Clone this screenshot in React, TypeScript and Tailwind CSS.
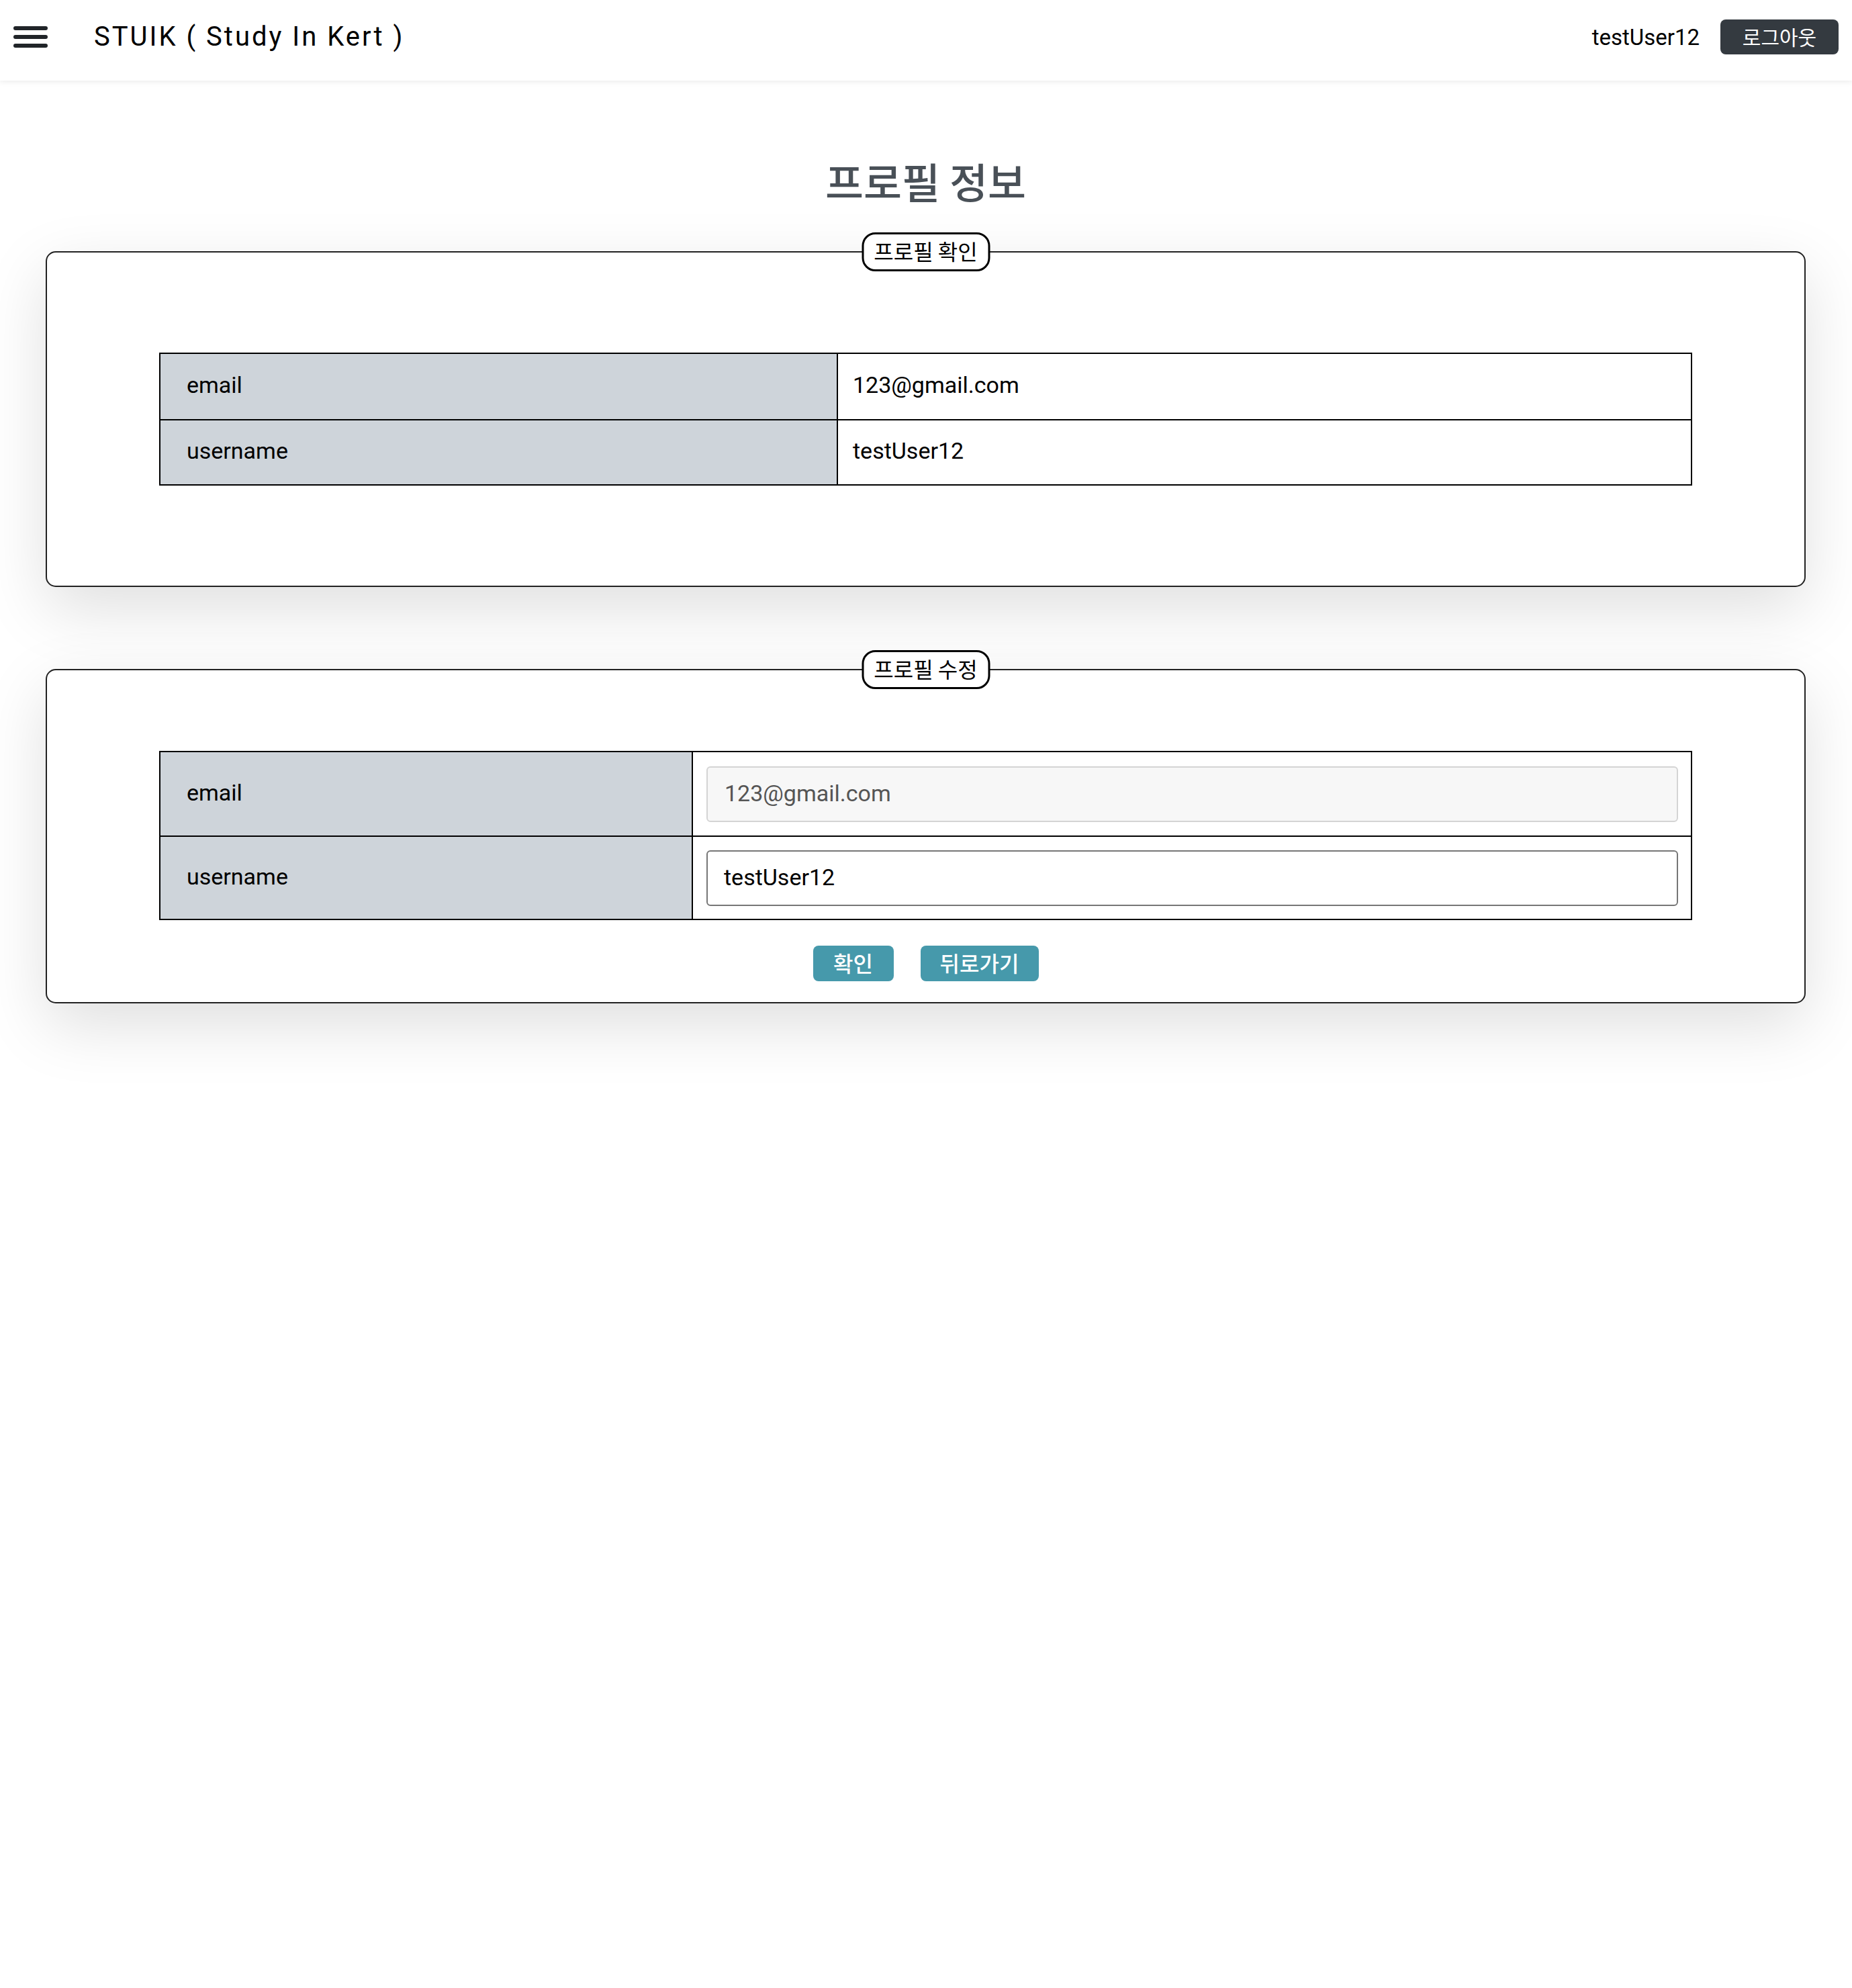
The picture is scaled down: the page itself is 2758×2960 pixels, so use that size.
import React from "react";

function Hamburger() {
  return (
    <div className="flex w-[51px] flex-col gap-[7px]">
      <span className="block h-[6px] rounded-full bg-[#212529]" />
      <span className="block h-[6px] rounded-full bg-[#212529]" />
      <span className="block h-[6px] rounded-full bg-[#212529]" />
    </div>
  );
}

function Legend({ text }: { text: string }) {
  return (
    <div className="absolute left-1/2 top-[-30px] flex h-[58px] w-[191px] -translate-x-1/2 items-center justify-center rounded-[20px] border-[3px] border-black bg-white pb-[4px] font-['Noto_Sans_CJK_KR',sans-serif] text-[32px] leading-none text-black">
      {text}
    </div>
  );
}

export default function App() {
  return (
    <div className="min-h-[2960px] bg-white font-['Roboto','Noto_Sans_CJK_KR',sans-serif] text-black">
      <header className="relative z-10 flex h-[120px] items-center bg-white pb-[10px] pl-[20px] pr-[20px] shadow-[0_2px_8px_rgba(0,0,0,0.08)]">
        <Hamburger />
        <div className="ml-[69px] text-[40px] leading-none tracking-[3px]">STUIK ( Study In Kert )</div>
        <div className="ml-auto flex items-center gap-[31px]">
          <span className="text-[33px] leading-none">testUser12</span>
          <button className="flex h-[52px] w-[176px] items-center justify-center rounded-[8px] bg-[#343a40] pb-[3px] font-['Noto_Sans_CJK_KR',sans-serif] text-[30px] leading-none text-white">
            로그아웃
          </button>
        </div>
      </header>

      <main className="pl-[68px] pr-[69px]">
        <h1 className="mt-[118px] text-center font-['Noto_Sans_CJK_KR',sans-serif] text-[62px] font-medium leading-none text-[#495057]">
          프로필 정보
        </h1>

        <section className="relative mt-[74px] rounded-[15px] border-2 border-[#222] bg-white px-[167px] py-[149px] shadow-[0_32px_96px_rgba(0,0,0,0.13)]">
          <Legend text="프로필 확인" />
          <div className="border-2 border-black text-[34px]">
            <div className="flex h-[97px]">
              <div className="flex w-[1009px] items-center border-r-2 border-black bg-[#ced4da] pb-[4px] pl-[39px]">email</div>
              <div className="flex flex-1 items-center pb-[4px] pl-[22px]">123@gmail.com</div>
            </div>
            <div className="flex h-[97px] border-t-2 border-black">
              <div className="flex w-[1009px] items-center border-r-2 border-black bg-[#ced4da] pb-[4px] pl-[39px]">username</div>
              <div className="flex flex-1 items-center pb-[4px] pl-[22px]">testUser12</div>
            </div>
          </div>
        </section>

        <section className="relative mt-[122px] rounded-[15px] border-2 border-[#222] bg-white px-[167px] pb-[31px] pt-[120px] shadow-[0_32px_96px_rgba(0,0,0,0.13)]">
          <Legend text="프로필 수정" />
          <div className="border-2 border-black text-[34px]">
            <div className="flex h-[124px]">
              <div className="flex w-[793px] items-center border-r-2 border-black bg-[#ced4da] pb-[4px] pl-[39px]">email</div>
              <div className="flex flex-1 items-center pl-[20px] pr-[19px]">
                <input
                  disabled
                  value="123@gmail.com"
                  readOnly
                  className="h-[83px] w-full rounded-[6px] border-2 border-[#d4d4d4] bg-[#f7f7f7] pb-[3px] pl-[25px] text-[34px] text-[#555]"
                />
              </div>
            </div>
            <div className="flex h-[124px] border-t-2 border-black">
              <div className="flex w-[793px] items-center border-r-2 border-black bg-[#ced4da] pb-[4px] pl-[39px]">username</div>
              <div className="flex flex-1 items-center pl-[20px] pr-[19px]">
                <input
                  defaultValue="testUser12"
                  className="h-[83px] w-full rounded-[6px] border-2 border-[#767676] bg-white pb-[3px] pl-[24px] text-[34px] text-black outline-none"
                />
              </div>
            </div>
          </div>
          <div className="mt-[38px] flex justify-center gap-[40px]">
            <button className="flex h-[53px] w-[120px] items-center justify-center rounded-[8px] bg-[#4699ab] pb-[4px] font-['Noto_Sans_CJK_KR',sans-serif] text-[32px] font-medium leading-none text-white">
              확인
            </button>
            <button className="flex h-[53px] w-[176px] items-center justify-center rounded-[8px] bg-[#4699ab] pb-[4px] font-['Noto_Sans_CJK_KR',sans-serif] text-[32px] font-medium leading-none text-white">
              뒤로가기
            </button>
          </div>
        </section>
      </main>
    </div>
  );
}
